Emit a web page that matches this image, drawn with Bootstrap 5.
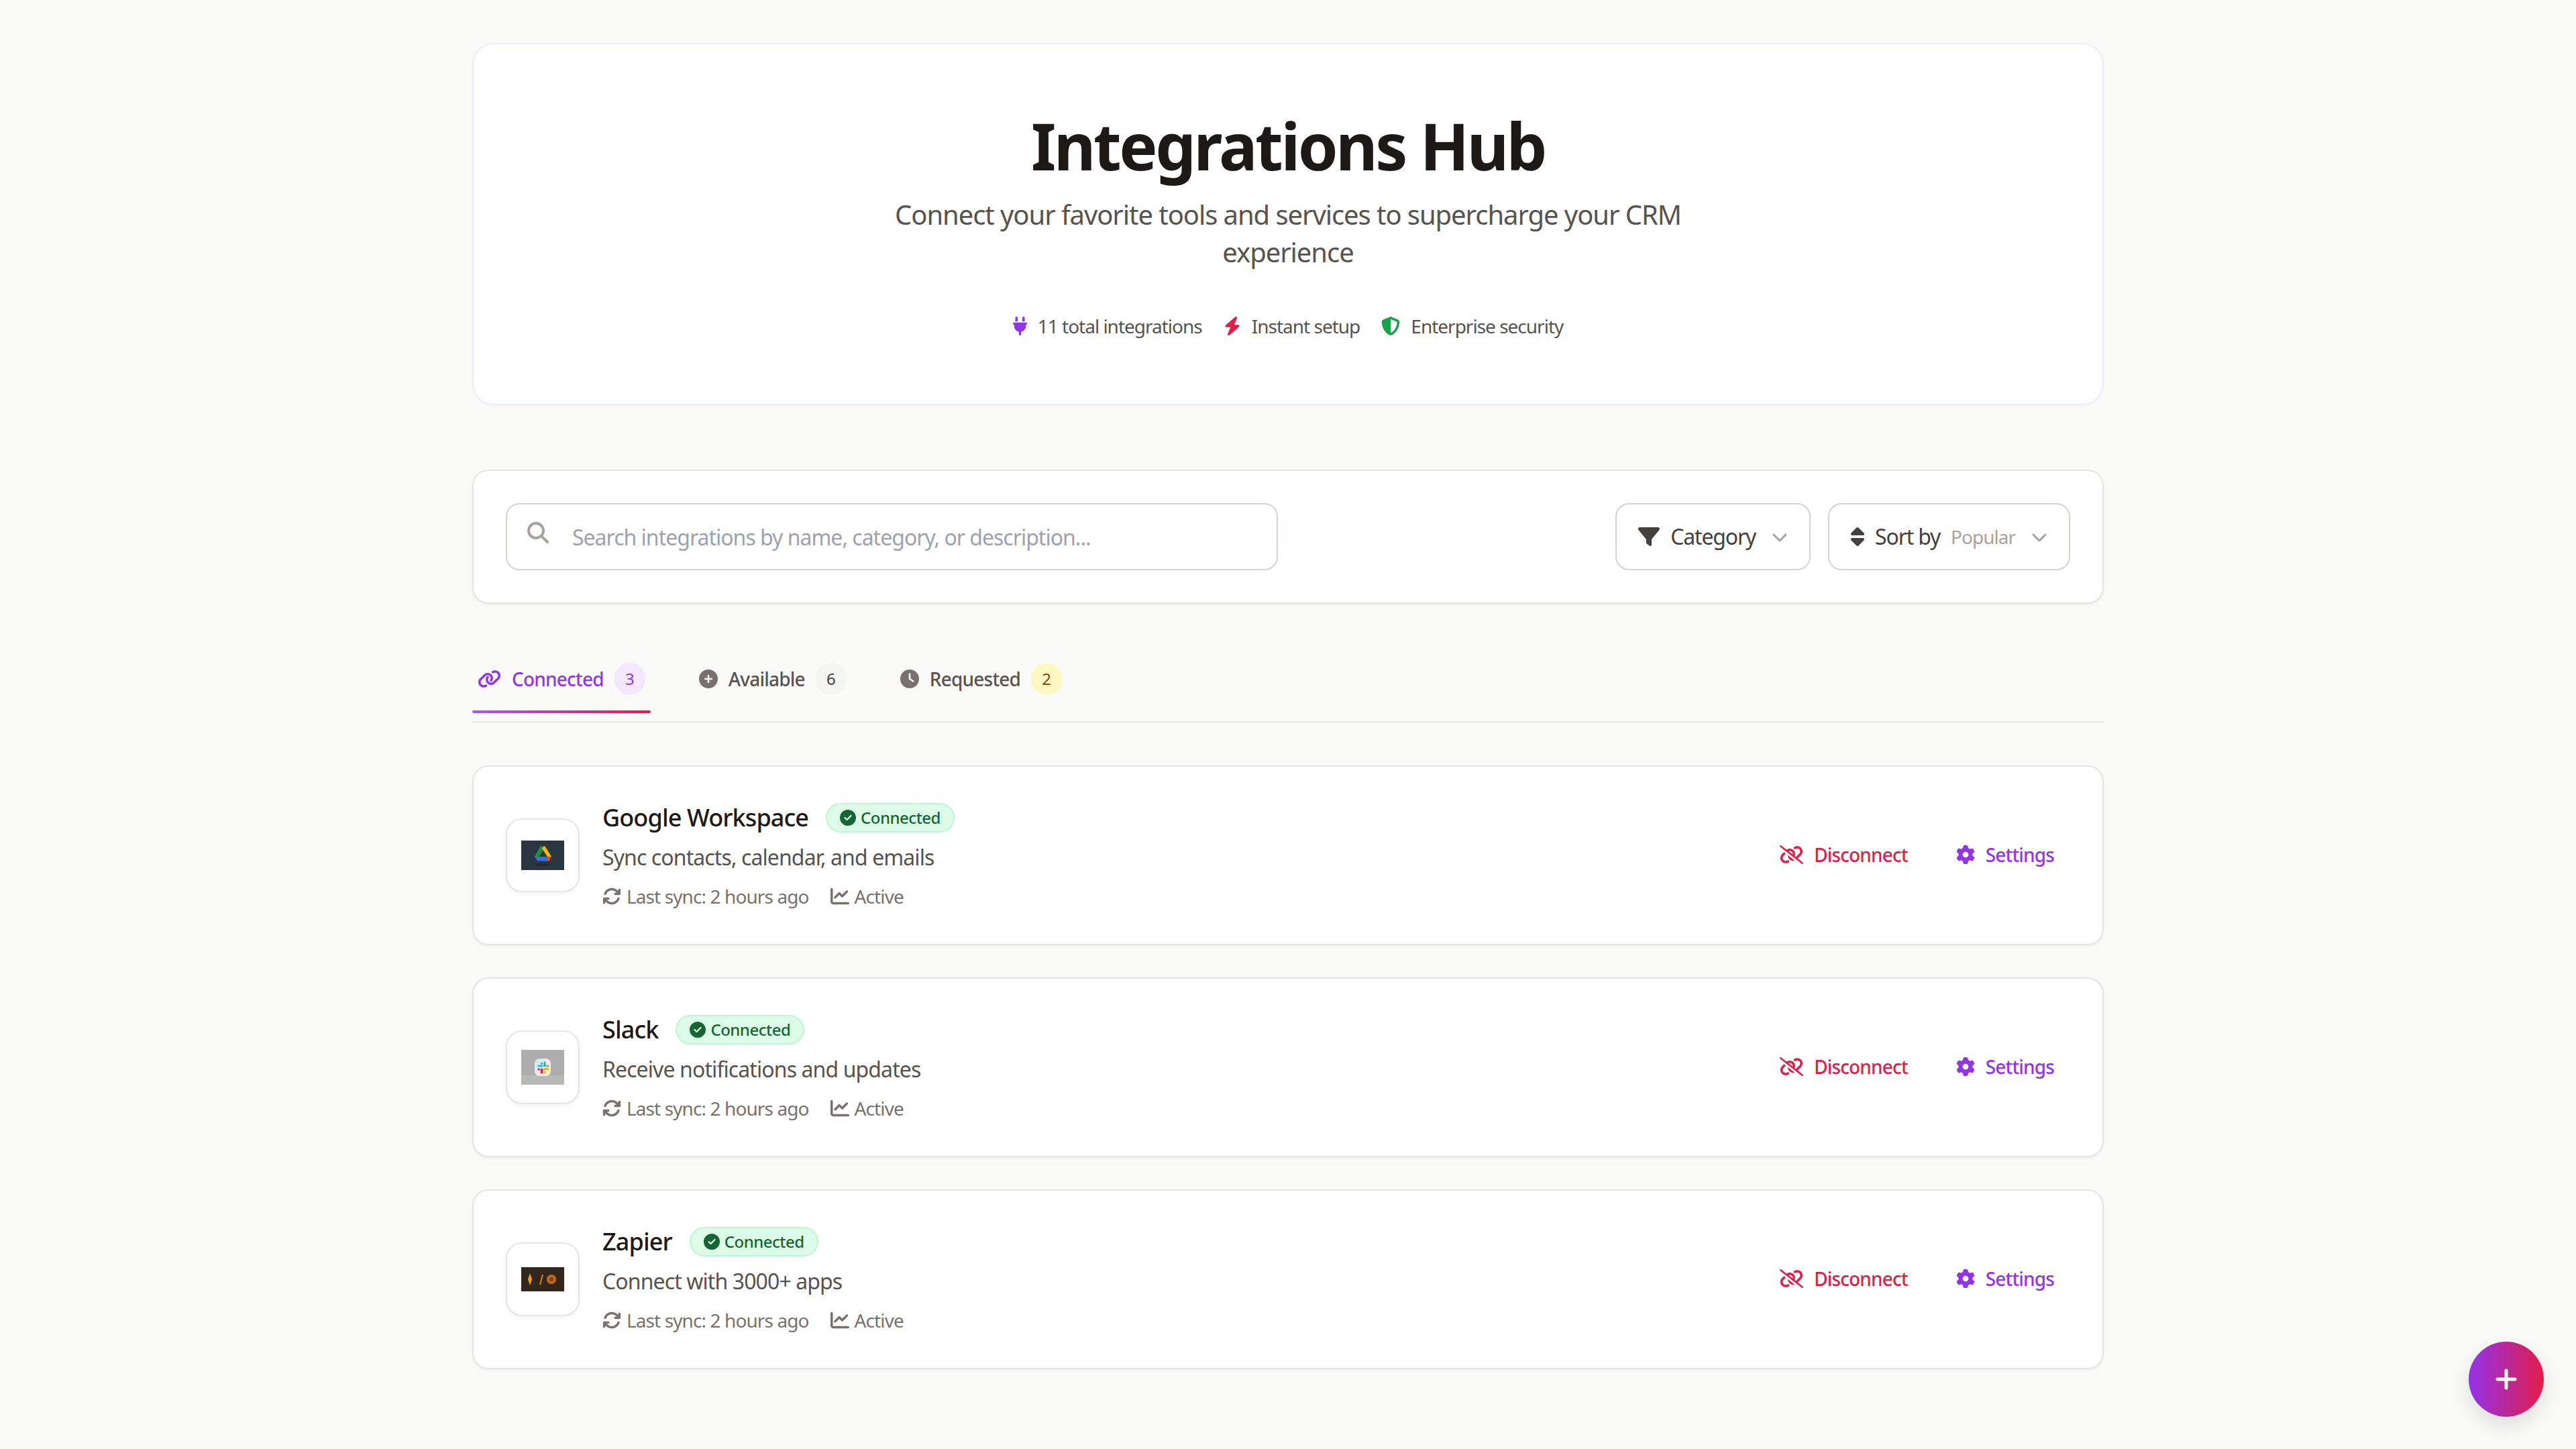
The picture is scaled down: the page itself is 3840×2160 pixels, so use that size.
<!DOCTYPE html>
<html lang="en">
<head>
  <meta charset="UTF-8">
  <meta name="viewport" content="width=device-width, initial-scale=1.0">
  <title>Integrations Hub</title>
  <link href="https://cdn.jsdelivr.net/npm/bootstrap@5.3.0/dist/css/bootstrap.min.css" rel="stylesheet">
  <style>
    body { background: #fafaf9; font-family: "Noto Sans", sans-serif; color: #1c1917; }
    .hub-wrap { width: 2432px; padding: 64px 0 96px; }
    .ico { fill: currentColor; flex-shrink: 0; }
    .tone-purple { color: #9333ea; }
    .tone-red { color: #e11d48; }
    .tone-green { color: #16a34a; }

    .hero-box { background: #fff; border: 2px solid #f3e8ff; border-radius: 32px; padding: 94px 48px 96px; box-shadow: 0 2px 4px rgba(0,0,0,.02); margin-bottom: 96px; }
    .hero-title { font-size: 96px; font-weight: 700; line-height: 114px; letter-spacing: -3.4px; margin: 0 0 18px; color: #1c1917; }
    .hero-sub { font-size: 40px; line-height: 56px; letter-spacing: -1.07px; color: #57534e; width: 1240px; margin: 0 auto 62px; }
    .hero-meta { font-size: 28px; line-height: 40px; letter-spacing: -1px; color: #57534e; gap: 32px; }

    .filter-box { background: #fff; border: 2px solid #e7e5e4; border-radius: 24px; padding: 48px; box-shadow: 0 2px 4px rgba(0,0,0,.05); margin-bottom: 64px; }
    .search-wrap { width: 1151px; }
    .search-ico { left: 32px; top: 28px; color: #a8a29e; }
    .search-input { height: 100px; border: 2px solid #d6d3d1; border-radius: 20px; padding-left: 97px; font-size: 32px; letter-spacing: -1px; box-shadow: none; }
    .search-input::placeholder { color: #9ca3af; }
    .pick-row { gap: 26px; }
    .pick-btn { height: 100px; background: #fff; border: 2px solid #d6d3d1; border-radius: 20px; padding: 0 32px; font-size: 32px; letter-spacing: -1.2px; color: #44403c; }
    .pick-btn:hover { background: #fff; color: #44403c; border-color: #d6d3d1; }
    .pick-val { font-size: 28px; letter-spacing: -1px; color: #a8a29e; }
    .chev { color: #a8a29e; }

    .tab-row { border-bottom: 2px solid #e7e5e4; gap: 64px; margin-bottom: 64px; height: 113px; padding-bottom: 15px; }
    .tab-item { height: 96px; padding: 0 8px; gap: 16px; font-size: 28px; letter-spacing: -.8px; font-weight: 500; color: #57534e; border: 0; background: none; position: relative; }
    .tab-item.on { color: #9333ea; }
    .tab-item.on::after { content: ""; position: absolute; left: 0; right: 0; bottom: -3px; height: 4px; border-radius: 2px; background: linear-gradient(90deg, #a855f7, #e11d48); }
    .tab-ico { color: #78716c; }
    .tab-item.on .tab-ico { color: #9333ea; }
    .tab-count { min-width: 46px; height: 48px; padding: 0 12px; border-radius: 24px; background: #f5f5f4; color: #44403c; font-size: 24px; font-weight: 400; letter-spacing: 0; }
    .tab-item.on .tab-count { background: #f3e8ff; color: #9333ea; }
    .tab-count.warn { background: #fef9c3; color: #854d0e; }

    .hub-card { background: #fff; border: 2px solid #e7e5e4; border-radius: 24px; padding: 48px; height: 268px; margin-bottom: 48px; box-shadow: 0 2px 4px rgba(0,0,0,.05); }
    .logo-box { width: 110px; height: 110px; background: #fff; border: 2px solid #e7e5e4; border-radius: 24px; box-shadow: 0 2px 6px rgba(0,0,0,.05); margin-right: 34px; }
    .logo-box svg { filter: blur(.5px); }
    .hub-name { font-size: 36px; line-height: 48px; letter-spacing: -.9px; font-weight: 500; margin: 0; color: #1c1917; }
    .status-pill { height: 44px; padding: 0 19px; gap: 7px; border: 2px solid #bbf7d0; border-radius: 22px; background: #dcfce7; color: #166534; font-size: 24px; letter-spacing: -.5px; font-weight: 500; margin-left: 26px; }
    .hub-desc { font-size: 32px; line-height: 44px; letter-spacing: -.9px; color: #57534e; margin: 13px 0 17px; }
    .hub-stat { font-size: 28px; line-height: 38px; letter-spacing: -.9px; color: #78716c; gap: 32px; }
    .act-btn { font-size: 28px; letter-spacing: -.85px; font-weight: 500; padding: 11px 24px 13px; gap: 16px; border: 0; background: none; }
    .act-btn.off { color: #e11d48; }
    .act-btn.set { color: #9333ea; }

    .fab-add { right: 48px; bottom: 48px; width: 112px; height: 112px; background: linear-gradient(90deg, #9333ea, #e11d48); color: #fff; box-shadow: 0 12px 32px rgba(0,0,0,.12); border: 0; }
  </style>
</head>
<body>
  <svg width="0" height="0" class="position-absolute">
    <symbol id="i-plug" viewBox="0 0 384 512"><path d="M96 0C78.3 0 64 14.3 64 32v96h64V32c0-17.7-14.3-32-32-32zM288 0c-17.7 0-32 14.3-32 32v96h64V32c0-17.7-14.3-32-32-32zM32 160c-17.7 0-32 14.3-32 32s14.3 32 32 32v32c0 77.4 55 142 128 156.8V480c0 17.7 14.3 32 32 32s32-14.3 32-32V412.8C297 398 352 333.4 352 256V224c17.7 0 32-14.3 32-32s-14.3-32-32-32H32z"/></symbol>
    <symbol id="i-bolt" viewBox="0 0 448 512"><path d="M349.4 44.6c5.9-13.7 1.5-29.7-10.6-38.5s-28.6-8-39.9 1.8l-256 224c-10 8.8-13.6 22.9-8.9 35.3S50.7 288 64 288H175.5L98.6 467.4c-5.9 13.7-1.5 29.7 10.6 38.5s28.6 8 39.9-1.8l256-224c10-8.8 13.6-22.9 8.9-35.3s-16.6-20.7-30-20.7H272.5L349.4 44.6z"/></symbol>
    <symbol id="i-shield" viewBox="0 0 512 512"><path d="M256 0c4.6 0 9.2 1 13.4 2.9L457.7 82.8c22 9.3 38.4 31 38.3 57.2c-.5 99.2-41.3 280.7-213.6 363.2c-16.7 8-36.1 8-52.8 0C57.3 420.7 16.5 239.2 16 140c-.1-26.2 16.3-47.9 38.3-57.2L242.7 2.9C246.8 1 251.4 0 256 0zm0 66.8V444.8C394 378 431.1 230.1 432 141.4L256 66.8l0 0z"/></symbol>
    <symbol id="i-search" viewBox="0 0 512 512"><path d="M416 208c0 45.9-14.9 88.3-40 122.7L502.6 457.4c12.5 12.5 12.5 32.8 0 45.3s-32.8 12.5-45.3 0L330.7 376c-34.4 25.2-76.8 40-122.7 40C93.1 416 0 322.9 0 208S93.1 0 208 0S416 93.1 416 208zM208 352a144 144 0 1 0 0-288 144 144 0 1 0 0 288z"/></symbol>
    <symbol id="i-filter" viewBox="0 0 512 512"><path d="M3.9 54.9C10.5 40.9 24.5 32 40 32H472c15.5 0 29.5 8.9 36.1 22.9s4.6 30.5-5.2 42.5L320 320.9V448c0 12.1-6.8 23.2-17.7 28.6s-23.8 4.3-33.5-3l-64-48c-8.1-6-12.8-15.5-12.8-25.6V320.9L9 97.3C-.7 85.4-2.8 68.8 3.9 54.9z"/></symbol>
    <symbol id="i-sort" viewBox="0 0 320 512"><path d="M137.4 41.4c12.5-12.5 32.8-12.5 45.3 0l128 128c9.2 9.2 11.9 22.9 6.9 34.9s-16.6 19.8-29.6 19.8H32c-12.9 0-24.6-7.8-29.6-19.8s-2.2-25.7 6.9-34.9l128-128zm0 429.3l-128-128c-9.2-9.2-11.9-22.9-6.9-34.9s16.6-19.8 29.6-19.8H288c12.9 0 24.6 7.8 29.6 19.8s2.2 25.7-6.9 34.9l-128 128c-12.5 12.5-32.8 12.5-45.3 0z"/></symbol>
    <symbol id="i-chevron" viewBox="0 0 512 512"><path d="M233.4 406.6c12.5 12.5 32.8 12.5 45.3 0l192-192c12.5-12.5 12.5-32.8 0-45.3s-32.8-12.5-45.3 0L256 338.7 86.6 169.4c-12.5-12.5-32.8-12.5-45.3 0s-12.5 32.8 0 45.3l192 192z"/></symbol>
    <symbol id="i-link" viewBox="0 0 640 512"><path d="M579.8 267.7c56.5-56.5 56.5-148 0-204.5c-50-50-128.8-56.5-186.3-15.4l-1.6 1.1c-14.4 10.3-17.7 30.3-7.4 44.6s30.3 17.7 44.6 7.4l1.6-1.1c32.1-22.9 76-19.3 103.8 8.6c31.5 31.5 31.5 82.5 0 114L422.3 334.8c-31.5 31.5-82.5 31.5-114 0c-27.9-27.9-31.5-71.8-8.6-103.8l1.1-1.6c10.3-14.4 6.9-34.4-7.4-44.6s-34.4-6.9-44.6 7.4l-1.1 1.6C206.5 251.2 213 330 263 380c56.5 56.5 148 56.5 204.5 0L579.8 267.7zM60.2 244.3c-56.5 56.5-56.5 148 0 204.5c50 50 128.8 56.5 186.3 15.4l1.6-1.1c14.4-10.3 17.7-30.3 7.4-44.6s-30.3-17.7-44.6-7.4l-1.6 1.1c-32.1 22.9-76 19.3-103.8-8.6C74 372 74 321 105.5 289.5L217.7 177.2c31.5-31.5 82.5-31.5 114 0c27.9 27.9 31.5 71.8 8.6 103.9l-1.1 1.6c-10.3 14.4-6.9 34.4 7.4 44.6s34.4 6.9 44.6-7.4l1.1-1.6C433.5 260.8 427 182 377 132c-56.5-56.5-148-56.5-204.5 0L60.2 244.3z"/></symbol>
    <symbol id="i-unlink" viewBox="0 0 640 512"><path d="M38.8 5.1C28.4-3.1 13.3-1.2 5.1 9.2S-1.2 34.7 9.2 42.9l592 464c10.4 8.2 25.5 6.3 33.7-4.1s6.3-25.5-4.1-33.7L489.3 358.2l90.5-90.5c56.5-56.5 56.5-148 0-204.5c-50-50-128.8-56.5-186.3-15.4l-1.6 1.1c-14.4 10.3-17.7 30.3-7.4 44.6s30.3 17.7 44.6 7.4l1.6-1.1c32.1-22.9 76-19.3 103.8 8.6c31.5 31.5 31.5 82.5 0 114l-96 96-31.9-25C430.9 239.6 420.1 175.1 377 132c-52.2-52.3-134.5-56.2-191.3-11.7L38.8 5.1zM239 162c30.1-14.9 67.7-9.9 92.8 15.3c20 20 27.5 48.3 21.7 74.5L239 162zM116.6 187.9L60.2 244.3c-56.5 56.5-56.5 148 0 204.5c50 50 128.8 56.5 186.3 15.4l1.6-1.1c14.4-10.3 17.7-30.3 7.4-44.6s-30.3-17.7-44.6-7.4l-1.6 1.1c-32.1 22.9-76 19.3-103.8-8.6C74 372 74 321 105.5 289.5l61.8-61.8-50.6-39.9zM220.9 270c-2.1 39.8 12.2 80.1 42.2 110c38.9 38.9 94.4 51 143.6 36.3L220.9 270z"/></symbol>
    <symbol id="i-plus-circle" viewBox="0 0 512 512"><path d="M256 512A256 256 0 1 0 256 0a256 256 0 1 0 0 512zM232 344V280H168c-13.3 0-24-10.7-24-24s10.7-24 24-24h64V168c0-13.3 10.7-24 24-24s24 10.7 24 24v64h64c13.3 0 24 10.7 24 24s-10.7 24-24 24H280v64c0 13.3-10.7 24-24 24s-24-10.7-24-24z"/></symbol>
    <symbol id="i-clock" viewBox="0 0 512 512"><path d="M256 0a256 256 0 1 1 0 512A256 256 0 1 1 256 0zM232 120V256c0 8 4 15.5 10.7 20l96 64c11 7.4 25.9 4.4 33.3-6.7s4.4-25.9-6.7-33.3L280 243.2V120c0-13.3-10.7-24-24-24s-24 10.7-24 24z"/></symbol>
    <symbol id="i-check" viewBox="0 0 512 512"><path d="M256 512A256 256 0 1 0 256 0a256 256 0 1 0 0 512zM369 209L241 337c-9.4 9.4-24.6 9.4-33.9 0l-64-64c-9.4-9.4-9.4-24.6 0-33.9s24.6-9.4 33.9 0l47 47L335 175c9.4-9.4 24.6-9.4 33.9 0s9.4 24.6 0 33.9z"/></symbol>
    <symbol id="i-sync" viewBox="0 0 512 512"><path d="M105.1 202.6c7.7-21.8 20.2-42.3 37.8-59.8c62.5-62.5 163.8-62.5 226.3 0L386.3 160H352c-17.7 0-32 14.3-32 32s14.3 32 32 32H463.5c0 0 0 0 0 0h.4c17.7 0 32-14.3 32-32V80c0-17.7-14.3-32-32-32s-32 14.3-32 32v35.2L414.4 97.6c-87.5-87.5-229.3-87.5-316.8 0C73.2 122 55.6 150.7 44.8 181.4c-5.9 16.7 2.9 34.9 19.5 40.8s34.9-2.9 40.8-19.5zM39 289.3c-5 1.5-9.8 4.2-13.7 8.2c-4 4-6.7 8.8-8.1 14c-.3 1.2-.6 2.5-.8 3.8c-.3 1.7-.4 3.4-.4 5.1V432c0 17.7 14.3 32 32 32s32-14.3 32-32V396.9l17.6 17.5 0 0c87.5 87.4 229.3 87.4 316.7 0c24.4-24.4 42.1-53.1 52.9-83.7c5.9-16.7-2.9-34.9-19.5-40.8s-34.9 2.9-40.8 19.5c-7.7 21.8-20.2 42.3-37.8 59.8c-62.5 62.5-163.8 62.5-226.3 0l-.1-.1L125.6 352H160c17.7 0 32-14.3 32-32s-14.3-32-32-32H48.4c-1.6 0-3.2 .1-4.8 .3s-3.1 .5-4.6 1z"/></symbol>
    <symbol id="i-chart" viewBox="0 0 512 512"><path d="M64 64c0-17.7-14.3-32-32-32S0 46.3 0 64V400c0 44.2 35.8 80 80 80H480c17.7 0 32-14.3 32-32s-14.3-32-32-32H80c-8.8 0-16-7.2-16-16V64zm406.6 86.6c12.5-12.5 12.5-32.8 0-45.3s-32.8-12.5-45.3 0L320 210.7l-57.4-57.4c-12.5-12.5-32.8-12.5-45.3 0l-112 112c-12.5 12.5-12.5 32.8 0 45.3s32.8 12.5 45.3 0L240 221.3l57.4 57.4c12.5 12.5 32.8 12.5 45.3 0l128-128z"/></symbol>
    <symbol id="i-cog" viewBox="0 0 512 512"><path d="M495.9 166.6c3.2 8.7 .5 18.4-6.4 24.6l-43.3 39.4c1.1 8.3 1.7 16.8 1.7 25.4s-.6 17.1-1.7 25.4l43.3 39.4c6.9 6.2 9.6 15.9 6.4 24.6c-4.4 11.9-9.7 23.3-15.8 34.3l-4.7 8.1c-6.6 11-14 21.4-22.1 31.2c-5.9 7.2-15.7 9.6-24.5 6.8l-55.7-17.7c-13.4 10.3-28.2 18.9-44 25.4l-12.5 57.1c-2 9.1-9 16.3-18.2 17.8c-13.8 2.3-28 3.5-42.5 3.5s-28.7-1.2-42.5-3.5c-9.2-1.5-16.2-8.7-18.2-17.8l-12.5-57.1c-15.8-6.5-30.6-15.1-44-25.4L83.1 425.9c-8.8 2.8-18.6 .3-24.5-6.8c-8.1-9.8-15.5-20.2-22.1-31.2l-4.7-8.1c-6.1-11-11.4-22.4-15.8-34.3c-3.2-8.7-.5-18.4 6.4-24.6l43.3-39.4C64.6 273.1 64 264.6 64 256s.6-17.1 1.7-25.4L22.4 191.2c-6.9-6.2-9.6-15.9-6.4-24.6c4.4-11.9 9.7-23.3 15.8-34.3l4.7-8.1c6.6-11 14-21.4 22.1-31.2c5.9-7.2 15.7-9.6 24.5-6.8l55.7 17.7c13.4-10.3 28.2-18.9 44-25.4l12.5-57.1c2-9.1 9-16.3 18.2-17.8C227.3 1.2 241.5 0 256 0s28.7 1.2 42.5 3.5c9.2 1.5 16.2 8.7 18.2 17.8l12.5 57.1c15.8 6.5 30.6 15.1 44 25.4l55.7-17.7c8.8-2.8 18.6-.3 24.5 6.8c8.1 9.8 15.5 20.2 22.1 31.2l4.7 8.1c6.1 11 11.4 22.4 15.8 34.3zM256 336a80 80 0 1 0 0-160 80 80 0 1 0 0 160z"/></symbol>
  </svg>

  <div class="hub-wrap mx-auto">
    <section class="hero-box text-center">
      <h1 class="hero-title">Integrations Hub</h1>
      <p class="hero-sub">Connect your favorite tools and services to supercharge your CRM experience</p>
      <div class="hero-meta d-flex justify-content-center align-items-center">
        <span class="d-flex align-items-center gap-3"><svg class="ico tone-purple" width="21" height="28"><use href="#i-plug"/></svg>11 total integrations</span>
        <span class="d-flex align-items-center gap-3"><svg class="ico tone-red" width="26" height="28"><use href="#i-bolt"/></svg>Instant setup</span>
        <span class="d-flex align-items-center gap-3"><svg class="ico tone-green" width="28" height="28"><use href="#i-shield"/></svg>Enterprise security</span>
      </div>
    </section>

    <section class="filter-box d-flex justify-content-between align-items-center">
      <div class="search-wrap position-relative">
        <svg class="ico search-ico position-absolute" width="32" height="32"><use href="#i-search"/></svg>
        <input type="text" class="form-control search-input" placeholder="Search integrations by name, category, or description...">
      </div>
      <div class="pick-row d-flex">
        <button class="btn pick-btn d-flex align-items-center">
          <svg class="ico me-3" width="32" height="32"><use href="#i-filter"/></svg>Category
          <svg class="ico chev ms-4" width="24" height="24"><use href="#i-chevron"/></svg>
        </button>
        <button class="btn pick-btn d-flex align-items-center">
          <svg class="ico me-3" width="20" height="32"><use href="#i-sort"/></svg>Sort by
          <span class="pick-val ms-3">Popular</span>
          <svg class="ico chev ms-4" width="24" height="24"><use href="#i-chevron"/></svg>
        </button>
      </div>
    </section>

    <div class="tab-row d-flex">
      <button class="tab-item on d-flex align-items-center">
        <svg class="ico tab-ico" width="35" height="28"><use href="#i-link"/></svg>Connected
        <span class="tab-count d-flex align-items-center justify-content-center">3</span>
      </button>
      <button class="tab-item d-flex align-items-center">
        <svg class="ico tab-ico" width="28" height="28"><use href="#i-plus-circle"/></svg>Available
        <span class="tab-count d-flex align-items-center justify-content-center">6</span>
      </button>
      <button class="tab-item d-flex align-items-center">
        <svg class="ico tab-ico" width="28" height="28"><use href="#i-clock"/></svg>Requested
        <span class="tab-count warn d-flex align-items-center justify-content-center">2</span>
      </button>
    </div>

    <div id="daftarKartu"></div>
  </div>

  <button class="fab-add btn rounded-circle position-fixed d-flex align-items-center justify-content-center p-0">
    <svg width="32" height="32" viewBox="0 0 32 32"><path d="M16 3v26M3 16h26" stroke="#fff" stroke-width="5" stroke-linecap="round"/></svg>
  </button>

  <script src="https://cdn.jsdelivr.net/npm/bootstrap@5.3.0/dist/js/bootstrap.bundle.min.js"></script>
  <script>
    // Logos are small pictures in the original, redrawn here
    const logoDrive = `<svg width="64" height="44" viewBox="0 0 64 44"><rect width="64" height="44" fill="#2a3640"/>
      <ellipse cx="32" cy="36" rx="12" ry="2.5" fill="#222c34"/>
      <path d="M28.5 8.5h6L35 12l-9 12h-6z" fill="#1f8f3c"/><path d="M33.5 8.5h2l9.5 15.5h-6l-8-12z" fill="#f2b515"/>
      <path d="M20 24h21l-2 6.5H24.5z" fill="#2f6fe0"/><path d="M39 24.5l6-.5-3.5 6.5H38z" fill="#e2452f"/></svg>`;

    const logoSlack = `<svg width="64" height="52" viewBox="0 0 64 52"><defs><linearGradient id="slackBg" x1="0" y1="0" x2="1" y2="1"><stop offset="0" stop-color="#b5f3f3"/><stop offset=".5" stop-color="#fbe4ee"/><stop offset="1" stop-color="#fbf0b0"/></linearGradient></defs>
      <rect width="64" height="52" fill="#adadad"/><rect y="38" width="64" height="14" fill="#b6bab6"/>
      <rect x="20" y="13" width="24" height="26" rx="7" fill="url(#slackBg)"/>
      <g stroke-width="3.2" stroke-linecap="round"><path d="M26 24h5" stroke="#2bb6e8"/><path d="M30.5 20v.5" stroke="#2bb6e8"/><path d="M35 19v5" stroke="#2eb67d"/><path d="M39 24h.5" stroke="#2eb67d"/><path d="M34.5 28.5h5" stroke="#ecb22e"/><path d="M35 33v.5" stroke="#ecb22e"/><path d="M30.5 29v5" stroke="#e01e5a"/><path d="M26 29h.5" stroke="#e01e5a"/></g></svg>`;

    const logoZapier = `<svg width="64" height="36" viewBox="0 0 64 36"><rect width="64" height="36" fill="#33261d"/>
      <path d="M13 9l3 9-3 9-3-9z" fill="#f59e0b"/><path d="M27 26l4-15h2l-4 15z" fill="#d98a1a"/>
      <circle cx="45" cy="18" r="7" fill="#c26a1a"/><circle cx="45" cy="18" r="3" fill="#7a4218"/></svg>`;

    const integrasi = [
      { nama: "Google Workspace", deskripsi: "Sync contacts, calendar, and emails", logo: logoDrive },
      { nama: "Slack", deskripsi: "Receive notifications and updates", logo: logoSlack },
      { nama: "Zapier", deskripsi: "Connect with 3000+ apps", logo: logoZapier }
    ];

    const daftar = document.getElementById("daftarKartu");
    integrasi.forEach((item) => {
      const kartu = document.createElement("div");
      kartu.className = "hub-card d-flex align-items-center";
      kartu.innerHTML = `
        <div class="logo-box d-flex align-items-center justify-content-center flex-shrink-0">${item.logo}</div>
        <div class="flex-grow-1">
          <div class="d-flex align-items-center">
            <h3 class="hub-name">${item.nama}</h3>
            <span class="status-pill d-flex align-items-center">
              <svg class="ico" width="24" height="24"><use href="#i-check"/></svg>
              Connected
            </span>
          </div>
          <p class="hub-desc">${item.deskripsi}</p>
          <div class="hub-stat d-flex align-items-center">
            <span class="d-flex align-items-center gap-2"><svg class="ico" width="28" height="28"><use href="#i-sync"/></svg>Last sync: 2 hours ago</span>
            <span class="d-flex align-items-center gap-2"><svg class="ico" width="28" height="28"><use href="#i-chart"/></svg>Active</span>
          </div>
        </div>
        <div class="d-flex align-items-center gap-4">
          <button class="act-btn off d-flex align-items-center">
            <svg class="ico" width="35" height="28"><use href="#i-unlink"/></svg>
            Disconnect
          </button>
          <button class="act-btn set d-flex align-items-center">
            <svg class="ico" width="28" height="28"><use href="#i-cog"/></svg>
            Settings
          </button>
        </div>`;
      daftar.appendChild(kartu);
    });
  </script>
</body>
</html>
